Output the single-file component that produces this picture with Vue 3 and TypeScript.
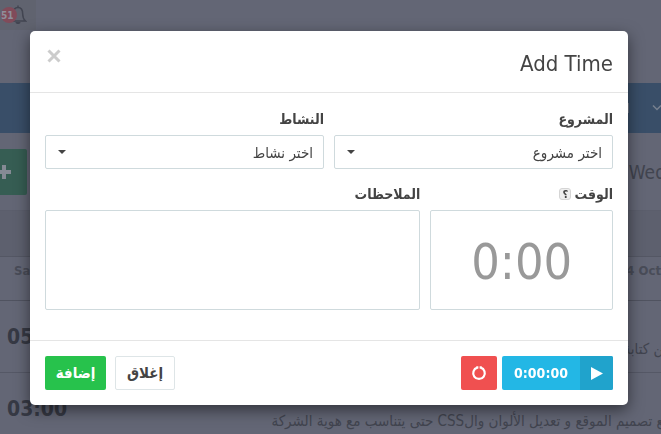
<script setup lang="ts">
import { ref } from 'vue'

interface Entry {
  total: string
  task: string
}

const entries: Entry[] = [
  { total: '05:00', task: 'من كتابة' },
  { total: '03:00', task: 'مع تصميم الموقع و تعديل الألوان والCSS حتى يتناسب مع هوية الشركة' },
]

const project = ref('')
const activity = ref('')
const notes = ref('')
const duration = ref('')
</script>

<template>
  <div class="page">
    <header class="topbar">
      <a class="alerts" href="#">
        <span class="count">51</span>
        <svg class="bell" viewBox="0 0 18 20" width="18" height="20" aria-hidden="true">
          <path d="M9 .5v2M1.500 16c2.500-2 2.800-4 2.800-7C4.300 5 6.300 2.500 9 2.500s4.700 2.500 4.700 6.500c0 3 .3 5 2.800 7z" />
          <path class="clapper" d="M6.500 17h5c0 2.700-5 2.700-5 0z" />
        </svg>
      </a>
    </header>
    <nav class="navbar">
      <span class="divider"></span>
      <svg viewBox="0 0 12 8" width="12" height="8" aria-hidden="true"><path d="M2 1.500l4 4 4-4" /></svg>
    </nav>
    <section class="toolbar">
      <button class="new" type="button" aria-label="New entry">
        <svg viewBox="0 0 16 16" width="16" height="16" aria-hidden="true"><path d="M6 1h4v5h5v4h-5v5H6v-5H1V6h5z" /></svg>
      </button>
      <span class="today">Wed</span>
    </section>
    <div class="band"></div>
    <div class="days"><span>Sat</span><span>24 Oct</span></div>
    <div v-for="entry in entries" :key="entry.total" class="entry">
      <strong>{{ entry.total }}</strong>
      <p dir="rtl">{{ entry.task }}</p>
    </div>
  </div>

  <div class="backdrop" dir="rtl">
    <form class="modal" role="dialog" aria-labelledby="modal-title" @submit.prevent>
      <header class="head">
        <h1 id="modal-title">Add Time</h1>
        <button class="dismiss" type="button" aria-label="Close">
          <svg viewBox="0 0 14 14" width="14" height="14" aria-hidden="true"><path d="M1.500 1.500l11 11M12.500 1.500l-11 11" /></svg>
        </button>
      </header>

      <div class="fields">
        <div class="field half">
          <label for="project">المشروع</label>
          <div class="picker">
            <select id="project" v-model="project">
              <option value="">اختر مشروع</option>
            </select>
            <svg class="caret" viewBox="0 0 8 4" width="8" height="4" aria-hidden="true"><path d="M0 0h8L4 4z" /></svg>
          </div>
        </div>
        <div class="field half">
          <label for="activity">النشاط</label>
          <div class="picker">
            <select id="activity" v-model="activity">
              <option value="">اختر نشاط</option>
            </select>
            <svg class="caret" viewBox="0 0 8 4" width="8" height="4" aria-hidden="true"><path d="M0 0h8L4 4z" /></svg>
          </div>
        </div>
        <div class="field third">
          <label for="duration">الوقت <span class="help">؟</span></label>
          <input id="duration" v-model="duration" type="text" placeholder="0:00" dir="ltr" />
        </div>
        <div class="field rest">
          <label for="notes">الملاحظات</label>
          <textarea id="notes" v-model="notes"></textarea>
        </div>
      </div>

      <footer class="foot">
        <div class="timer" dir="ltr">
          <button class="reset" type="button" aria-label="Reset timer">
            <svg viewBox="0 0 16 16" width="16" height="16" aria-hidden="true"><path d="M6.300 1.200v1.400a5.800 5.800 0 1 0 3.400 0V1.200" /></svg>
          </button>
          <button class="start" type="button">
            <span class="clock">0:00:00</span>
            <span class="play">
              <svg viewBox="0 0 12 13" width="12" height="13" aria-hidden="true"><path d="M0 0l12 6.500L0 13z" /></svg>
            </span>
          </button>
        </div>
        <div class="actions">
          <button class="close" type="button">إغلاق</button>
          <button class="add" type="submit">إضافة</button>
        </div>
      </footer>
    </form>
  </div>
</template>

<style>
body {
  background: #636675;
}
</style>

<style scoped>
* {
  box-sizing: border-box;
}

.page,
.backdrop {
  font-family: Tahoma, "DejaVu Sans Condensed", "DejaVu Sans", sans-serif;
  font-size: 13px;
  color: #444;
}

button,
input,
select,
textarea {
  font: inherit;
  color: inherit;
}

button {
  padding: 0;
  border: 0;
  cursor: pointer;
}

svg {
  display: block;
}

.page {
  height: 100vh;
  overflow: hidden;
  background: #636675;
  color: #41444f;
}

.topbar {
  display: flex;
  align-items: flex-start;
  height: 83px;
}

.alerts {
  display: flex;
  align-items: center;
  width: 36px;
  height: 30px;
  padding-left: 1px;
  background: #60636f;
  color: #8f8f9b;
  text-decoration: none;
}

.count {
  position: relative;
  display: flex;
  align-items: center;
  flex: none;
  width: 16px;
  height: 16px;
  border-radius: 50%;
  background: #814b5a;
  font-size: 10px;
  font-weight: bold;
}

.bell {
  flex: none;
  margin-left: -8px;
  fill: none;
  stroke: #424551;
  stroke-width: 1.5;
}

.bell .clapper {
  fill: #424551;
  stroke: none;
}

.navbar {
  display: flex;
  align-items: center;
  justify-content: flex-end;
  gap: 22px;
  height: 50px;
  background: #394e68;
}

.navbar .divider {
  width: 1px;
  height: 10px;
  background: #6c7484;
}

.navbar svg {
  flex: none;
  margin-right: -2px;
  fill: none;
  stroke: #77808f;
  stroke-width: 1.5;
}

.toolbar {
  display: flex;
  align-items: center;
  justify-content: space-between;
  height: 77px;
}

.new {
  display: flex;
  align-items: center;
  width: 27px;
  height: 46px;
  border-radius: 0 2px 2px 0;
  background: #365d53;
}

.new svg {
  margin-left: -4px;
  fill: #858a94;
}

.today {
  margin-right: -5px;
  font-size: 19px;
}

.band {
  height: 47px;
  border-top: 1px solid #5b5e6c;
  border-bottom: 1px solid #545764;
  background: #5d606e;
}

.days {
  display: flex;
  justify-content: space-between;
  height: 44px;
  padding: 6px 0 0 14px;
  border-bottom: 1px solid #505360;
  color: #494c58;
  font-weight: bold;
  line-height: 16px;
}

.entry {
  display: flex;
  align-items: center;
  justify-content: space-between;
  height: 72px;
  padding-left: 7px;
  border-bottom: 1px solid #555866;
}

.entry strong {
  font-size: 21px;
  color: #363944;
}

.entry p {
  margin: 24px -10px 0 0;
  font-size: 15px;
  white-space: nowrap;
}

.backdrop {
  position: fixed;
  inset: 0;
  padding: 31px 33px 29px 30px;
  overflow: hidden;
}

.modal {
  border-radius: 5px;
  background: #fff;
  box-shadow: 0 5px 15px rgba(0, 0, 0, 0.5);
}

.head {
  display: flex;
  align-items: center;
  justify-content: space-between;
  height: 62px;
  padding: 0 15px;
  border-bottom: 1px solid #e5e5e5;
}

.head h1 {
  margin: 3px 0 0;
  font-size: 22px;
  font-weight: normal;
}

.dismiss {
  align-self: flex-start;
  margin: 18px 0 0 2px;
  background: none;
}

.dismiss svg {
  fill: none;
  stroke: #ccc;
  stroke-width: 3;
}

.fields {
  display: grid;
  grid-template-columns: repeat(12, 1fr);
  gap: 14px 10px;
  padding: 15px 15px 30px;
}

.field {
  display: flex;
  flex-direction: column;
  gap: 5px;
  min-width: 0;
}

.half {
  grid-column: span 6;
}

.third {
  grid-column: span 4;
}

.rest {
  grid-column: span 8;
}

label {
  display: flex;
  align-items: center;
  gap: 3px;
  height: 22px;
  font-size: 14px;
  font-weight: bold;
}

.help {
  display: flex;
  align-items: center;
  justify-content: center;
  width: 12px;
  height: 12px;
  border: 1px solid #d5d5d5;
  border-radius: 3px;
  background: #eee;
  font-size: 11px;
}

.picker {
  display: grid;
  align-items: center;
}

.picker > * {
  grid-area: 1 / 1;
}

select,
input,
textarea {
  width: 100%;
  margin: 0;
  border: 1px solid #cfdadd;
  border-radius: 2px;
  background: #fff;
}

select {
  height: 34px;
  padding: 2px 10px 0;
  appearance: none;
  font-size: 15px;
}

.caret {
  justify-self: end;
  margin-left: 13px;
  fill: #444;
  pointer-events: none;
}

input {
  height: 100px;
  padding: 4px 0 0;
  font-size: 50px;
  text-align: center;
}

input::placeholder {
  color: #999;
  opacity: 1;
}

textarea {
  display: block;
  height: 100px;
  padding: 6px 11px;
  resize: none;
}

.foot {
  display: flex;
  justify-content: space-between;
  padding: 15px;
  border-top: 1px solid #e5e5e5;
}

.timer {
  display: flex;
  gap: 5px;
}

.reset,
.start {
  display: flex;
  align-items: center;
  justify-content: center;
  height: 34px;
  border-radius: 2px;
  overflow: hidden;
}

.reset {
  width: 36px;
  background: #f05050;
}

.reset svg {
  fill: none;
  stroke: #fff;
  stroke-width: 2.2;
}

.start {
  background: #23b7e5;
  color: #fff;
  font-size: 14px;
  font-weight: bold;
}

.clock {
  width: 78px;
}

.play {
  display: flex;
  align-items: center;
  justify-content: center;
  width: 33px;
  height: 34px;
  background: #20a3cc;
}

.play svg {
  fill: #fff;
}

.actions {
  display: flex;
  gap: 9px;
}

.actions button {
  height: 34px;
  padding: 0 10px;
  border-radius: 2px;
  font-size: 15px;
  font-weight: bold;
}

.actions .close {
  min-width: 60px;
  border: 1px solid #dee5e7;
  background: #fff;
}

.actions .add {
  min-width: 61px;
  background: #27c24c;
  color: #fff;
}
</style>
